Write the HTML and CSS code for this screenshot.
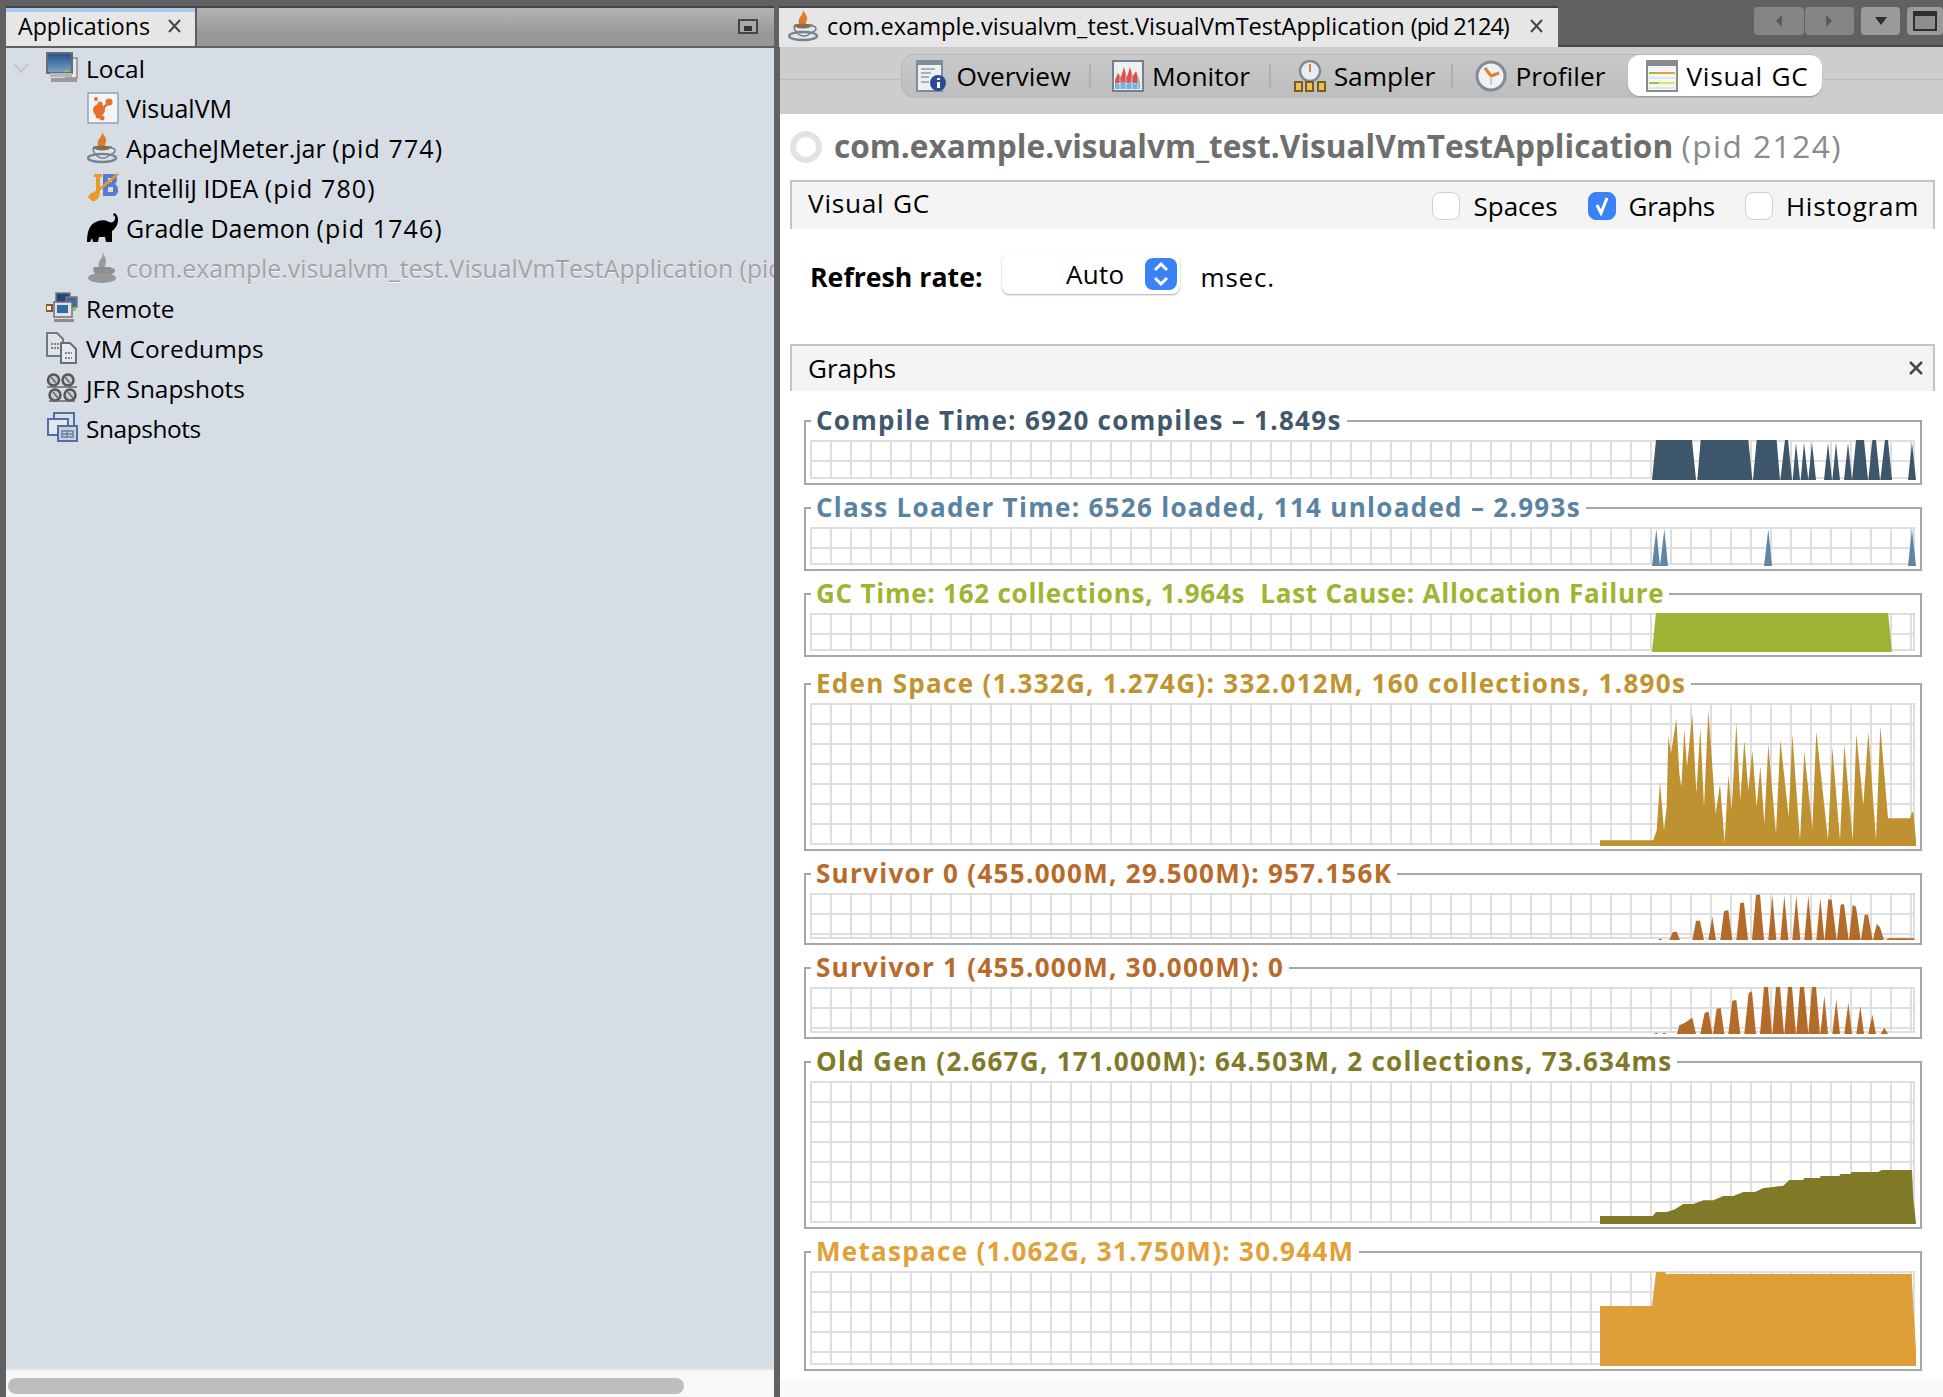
FILE: index.html
```html
<!DOCTYPE html>
<html lang="en">
<head>
<meta charset="utf-8">
<title>VisualVM</title>
<link rel="stylesheet" href="styles.css">
</head>
<body>
<svg class="defs" width="0" height="0" aria-hidden="true">
  <defs>
    <linearGradient id="scr" x1="0" y1="0" x2="0" y2="1"><stop offset="0" stop-color="#1f4f8f"/><stop offset="1" stop-color="#7fa6c4"/></linearGradient>
    <symbol id="cup" viewBox="0 0 32 32">
      <path d="M15 0c2 4 5 6 4 10-1 3-2 5-3 6h-3c-3-2-3-6-1-9 2-2 3-4 3-7z" fill="#e07a2c"/>
      <path d="M7 15h17v1c3 0 4 1 4 3s-3 3-6 4c-1 2-3 3-6 3s-7-2-9-6c-1-2-1-4 0-5z" fill="#dfe6ec" stroke="#6d7a85" stroke-width="1.5"/>
      <ellipse cx="15" cy="16" rx="8" ry="2.5" fill="#8a6a4a"/>
      <ellipse cx="15" cy="26" rx="14" ry="4" fill="none" stroke="#78848d" stroke-width="2.5"/>
    </symbol>
    <symbol id="cupg" viewBox="0 0 32 32">
      <path d="M16 0c1 4 3 6 3 9 0 3-1 5-2 7h-4c-2-2-2-5 0-8 2-2 3-4 3-8z" fill="#9a9a9a"/>
      <path d="M7 15h17v1c3 0 4 1 4 3s-3 3-6 4c-1 2-3 3-6 3s-7-2-9-6c-1-2-1-4 0-5z" fill="#8f8f8f"/>
      <ellipse cx="15" cy="26" rx="14" ry="5" fill="#979797"/>
    </symbol>
    <symbol id="close" viewBox="0 0 15 14">
      <path d="M2 1l11 12M13 1L2 13" stroke="#444" stroke-width="2" fill="none"/>
    </symbol>
  </defs>
</svg>
<div class="app">
  <section class="left">
    <header class="left-head">
      <div class="left-tab"><span>Applications</span><svg class="close"><use href="#close"/></svg></div>
      <span class="minimize"><i></i></span>
    </header>
    <div class="tree">
      <div class="row">
        <svg class="chev" width="18" height="12" viewBox="0 0 18 12"><path d="M2 2l7 8 7-8" fill="none" stroke="#c2c8ce" stroke-width="2"/></svg>
        <svg class="ico" viewBox="0 0 32 32"><rect x="20" y="6" width="11" height="20" fill="#e8e8e8" stroke="#8c8c8c" stroke-width="1.5"/><rect x="1" y="1" width="25" height="20" fill="url(#scr)" stroke="#6b6b6b" stroke-width="2"/><rect x="4" y="21" width="22" height="4" fill="#b8b8b8"/><rect x="19" y="18" width="3" height="2" fill="#7ed24a"/><rect x="5" y="26" width="26" height="4" fill="#9a9a9a"/></svg>
        <span>Local</span>
      </div>
      <div class="row lvl2">
        <svg class="ico" viewBox="0 0 32 32"><rect x="1" y="1" width="30" height="30" fill="#f4f4f4" stroke="#8ea3ba" stroke-width="1.5"/><g fill="#e5702c"><circle cx="12" cy="18" r="6"/><circle cx="22" cy="10" r="3.5"/><circle cx="9" cy="7" r="2"/><circle cx="13" cy="12" r="2.5"/><path d="M14 16l8-7 1 2-7 7z"/><circle cx="15" cy="26" r="2.5"/><circle cx="11" cy="24" r="2.5"/></g></svg>
        <span>VisualVM</span>
      </div>
      <div class="row lvl2"><svg class="ico"><use href="#cup"/></svg><span>ApacheJMeter.jar <span class="pid">(pid 774)</span></span></div>
      <div class="row lvl2">
        <svg class="ico" viewBox="0 0 32 32"><path d="M7 2h8v3h-2v14c0 7-4 11-8 10l-4-4 4-5 3 3 1-4V5H7z" fill="#ea9a2c"/><path d="M16 2h10c3 0 4 2 4 5s-1 4-2 5c2 1 3 3 3 6 0 4-2 6-5 6H16zm5 4v4h4V6zm0 9v5h5v-5z" fill="#5a7cc6" fill-rule="evenodd"/><path d="M2 26L31 2" stroke="#ea9a2c" stroke-width="2.5"/></svg>
        <span>IntelliJ IDEA <span class="pid">(pid 780)</span></span>
      </div>
      <div class="row lvl2">
        <svg class="ico" viewBox="0 0 32 32"><path d="M0 30C0 21 2 14 7 11 11 8 18 7 22 10 25 11 27 10 28 7 28.500 5 28 4 26 3L27 1C30 2 31 5 31 8 31 13 28 17 25 19L25 30H19L18 25H12L11 30H6L5 26 3 30Z" fill="#000"/></svg>
        <span>Gradle Daemon <span class="pid">(pid 1746)</span></span>
      </div>
      <div class="row lvl2 dis"><svg class="ico"><use href="#cupg"/></svg><span>com.example.visualvm_test.VisualVmTestApplication (pid 2124)</span></div>
      <div class="row">
        <svg class="ico" viewBox="0 0 32 32"><rect x="10" y="1" width="14" height="11" fill="#24457e" stroke="#7a7a7a" stroke-width="1.500"/><rect x="20" y="5" width="11" height="10" fill="#3e6aa5" stroke="#7a7a7a" stroke-width="1.500"/><rect x="8" y="10" width="18" height="15" fill="#dfe3e6" stroke="#707070" stroke-width="1.500"/><rect x="11" y="13" width="11" height="8" fill="#2f6ba5"/><rect x="0" y="13" width="6" height="6" fill="#eee" stroke="#8a5a24" stroke-width="2"/><rect x="27" y="16" width="3" height="3" fill="#7ed24a"/><rect x="8" y="27" width="20" height="3" fill="#8c8c8c"/></svg>
        <span>Remote</span>
      </div>
      <div class="row">
        <svg class="ico" viewBox="0 0 32 32"><path d="M1 1h10l6 6v17H1z" fill="#dfe4e9" stroke="#707880" stroke-width="2"/><path d="M15 11h9l6 6v14H15z" fill="#e6eaee" stroke="#66707a" stroke-width="2"/><path d="M5 12h8M5 16h8M19 21h7M19 26h7" stroke="#7d848b" stroke-width="2" stroke-dasharray="2 1"/></svg>
        <span class="wide">VM Coredumps</span>
      </div>
      <div class="row">
        <svg class="ico" viewBox="0 0 32 32"><g fill="#c8ccd0" stroke="#555" stroke-width="2.500"><circle cx="7.500" cy="8" r="5.500"/><circle cx="22" cy="8" r="5.500"/><circle cx="9" cy="23" r="5.500"/><circle cx="24" cy="23" r="5.500"/></g><path d="M5 5l5 6M19 5l5 6M7 20l5 6M22 20l5 6M1 15h30M3 29h26" stroke="#666" stroke-width="1.500" fill="none"/></svg>
        <span>JFR Snapshots</span>
      </div>
      <div class="row">
        <svg class="ico" viewBox="0 0 32 32"><rect x="8" y="1" width="20" height="14" fill="#d8dee6" stroke="#4f6ea8" stroke-width="2"/><rect x="2" y="7" width="20" height="16" fill="#e3e7ec" stroke="#4f6ea8" stroke-width="2"/><rect x="12" y="14" width="19" height="15" fill="#c8d0dc" stroke="#4f6ea8" stroke-width="2"/><path d="M16 19h11v6H16zM21 19v6M16 22h11" fill="none" stroke="#6d7f99" stroke-width="1.500"/></svg>
        <span class="tight">Snapshots</span>
      </div>
    </div>
    <div class="left-scroll"><div class="thumb"></div></div>
  </section>

  <section class="right">
    <header class="right-head">
      <div class="right-tab">
        <svg class="ico"><use href="#cup"/></svg>
        <span class="tab-label">com.example.visualvm_test.VisualVmTestApplication <span class="tab-pid">(pid 2124)</span></span>
        <svg class="close"><use href="#close"/></svg>
      </div>
      <div class="win-btns">
        <div class="btn-pair">
          <span class="wbtn"><svg width="8" height="14" viewBox="0 0 8 14"><path d="M7 1L1 7l6 6z" fill="#5b5b5b"/></svg></span>
          <span class="wbtn"><svg width="8" height="14" viewBox="0 0 8 14"><path d="M1 1l6 6-6 6z" fill="#5b5b5b"/></svg></span>
        </div>
        <span class="wbtn solo"><svg width="14" height="10" viewBox="0 0 14 10"><path d="M1 1h12L7 9z" fill="#2e2e2e"/></svg></span>
        <span class="wbtn last"><svg width="24" height="20" viewBox="0 0 24 20"><rect x="1" y="1" width="22" height="18" fill="#8e8e8e" stroke="#2e2e2e" stroke-width="2"/><rect x="1" y="1" width="22" height="4" fill="#2e2e2e"/></svg></span>
      </div>
    </header>
    <nav class="toolbar">
      <div class="pill">
        <div class="tool nudge-l">
          <svg class="ico" viewBox="0 0 32 32"><rect x="1" y="1" width="25" height="30" fill="#eef1f4" stroke="#7f8c99" stroke-width="2"/><rect x="1" y="1" width="25" height="4" fill="#7f8c99"/><path d="M5 9h14M5 13h10M5 17h8M5 22h8" stroke="#a9b3bd" stroke-width="2"/><circle cx="22" cy="23" r="8" fill="#2b4a94"/><rect x="21" y="22" width="3" height="6" fill="#fff"/><rect x="21" y="18" width="3" height="2" fill="#fff"/></svg>
          <span>Overview</span>
        </div>
        <div class="tool">
          <svg class="ico" viewBox="0 0 32 32"><rect x="1" y="1" width="30" height="30" fill="#eceff2" stroke="#72808d" stroke-width="2"/><path d="M3 20l3-7 3 4 3-10 3 10 3-10 3 9 3-5 3 8v4H3z" fill="#d9534f"/><path d="M3 29v-7l4 2 4-3 4 3 4-3 4 3 5-3v8z" fill="#7fb0dd"/><path d="M8 3v26M14 3v26M20 3v26M26 3v26" stroke="#fff" stroke-width="1" opacity=".6"/></svg>
          <span>Monitor</span>
        </div>
        <div class="tool nudge-r">
          <svg class="ico" viewBox="0 0 32 32"><circle cx="16" cy="11" r="10" fill="#e9edf1" stroke="#808b95" stroke-width="2.500"/><path d="M16 4v8" stroke="#e0802e" stroke-width="2"/><g fill="#e6c25a" stroke="#7d5a1d" stroke-width="2"><rect x="1" y="22" width="7" height="9"/><rect x="12" y="22" width="7" height="9"/><rect x="24" y="22" width="7" height="9"/></g></svg>
          <span>Sampler</span>
        </div>
        <div class="tool">
          <svg class="ico" viewBox="0 0 32 32"><circle cx="16" cy="16" r="14" fill="#f0f2f4" stroke="#7f8b96" stroke-width="3"/><path d="M16 16L10 8M16 16l8-3" stroke="#e0802e" stroke-width="3"/><path d="M16 17v8" stroke="#c6ccd2" stroke-width="2"/></svg>
          <span>Profiler</span>
        </div>
        <div class="tool active nudge-r">
          <svg class="ico" viewBox="0 0 32 32"><rect x="1" y="1" width="30" height="30" fill="#f5f6f7" stroke="#868b90" stroke-width="2"/><rect x="1" y="1" width="30" height="5" fill="#868b90"/><path d="M3 13h26" stroke="#e8a32c" stroke-width="2"/><path d="M3 13h8M3 23h10" stroke="#8ec63f" stroke-width="2"/><path d="M13 23h16" stroke="#e8e24c" stroke-width="2"/><path d="M3 18h26M3 28h26" stroke="#cfd3d6" stroke-width="1"/></svg>
          <span class="spaced">Visual GC</span>
        </div>
      </div>
    </nav>
    <main class="content">
      <div class="title-row">
        <span class="busy"></span>
        <h1 class="title">com.example.visualvm_test.VisualVmTestApplication <small>(pid 2124)</small></h1>
      </div>
      <div class="section-bar">
        <span class="spaced">Visual GC</span>
        <div class="checks">
          <label class="check"><i class="box"></i>Spaces</label>
          <label class="check graphs"><i class="box on"><svg width="20" height="22" viewBox="0 0 20 22"><path d="M5 10l4 8 6-15" fill="none" stroke="#fff" stroke-width="3"/></svg></i>Graphs</label>
          <label class="check hist"><i class="box"></i>Histogram</label>
        </div>
      </div>
      <div class="refresh">
        <b>Refresh rate:</b>
        <div class="combo"><span>Auto</span><i class="stepper"><svg width="32" height="32" viewBox="0 0 32 32"><path d="M10 12l6-6 6 6M10 20l6 6 6-6" fill="none" stroke="#fff" stroke-width="3"/></svg></i></div>
        <span class="msec">msec.</span>
      </div>
      <div class="section-bar graphs-bar">
        <span>Graphs</span>
        <svg width="14" height="14" viewBox="0 0 14 14"><path d="M1 1l12 12M13 1L1 13" stroke="#4a4a4a" stroke-width="2.600"/></svg>
      </div>
      <div class="panels">
        <div class="panel">
          <h2 class="legend c-compile">Compile Time: 6920 compiles – 1.849s</h2>
          <div class="chart h-39">
            <svg class="data" width="356" height="40" viewBox="0 330 1068 120"><path fill="#3d566a" d="M276 450L288 330H396L408 450ZM412 450L422 330H565L577 450ZM579 450L590 330H650L660 450ZM661 450L675 330H684L696 450ZM698 450L708 338L720 450ZM722 450L732 338L745 450ZM745 450L756 338L768 450ZM792 450L804 338L816 450ZM817 450L828 338L840 450ZM852 450L864 338L876 450ZM876 450L888 330H912L924 450ZM925 450L937 330H948L960 450ZM961 450L975 330H984L996 450ZM1044 450L1056 338L1068 450Z"/></svg>
          </div>
        </div>
        <div class="panel">
          <h2 class="legend c-class">Class Loader Time: 6526 loaded, 114 unloaded – 2.993s</h2>
          <div class="chart h-38">
            <svg class="data" width="356" height="39" viewBox="0 591 1068 117"><path fill="#5f87a5" d="M276 708L289 597L300 708ZM300 708L313 597L324 708ZM612 708L625 597L636 708ZM1044 708L1056 597L1068 708Z"/></svg>
          </div>
        </div>
        <div class="panel">
          <h2 class="legend c-gc">GC Time: 162 collections, 1.964s&nbsp; Last Cause: Allocation Failure</h2>
          <div class="chart h-38">
            <svg class="data" width="356" height="39" viewBox="0 849 1068 117"><path fill="#9fb236" d="M276 966L288 846H984L996 966Z"/></svg>
          </div>
        </div>
        <div class="panel wide-gap">
          <h2 class="legend c-eden">Eden Space (1.332G, 1.274G): 332.012M, 160 collections, 1.890s</h2>
          <div class="chart h-142">
            <svg class="data" width="356" height="143" viewBox="0 128 1068 429"><path fill="#be9230" d="M120 540H280L290 510L300 365L312 510L320 440L325 228L333 280L349 175L358 340L364 380L373 207L381 320L397 162L409 400L421 204L432 440L445 150L467 460L480 372L494 545L505 345L515 450L529 187L541 420L553 240L565 390L577 270L590 440L601 318L613 490L625 252L648 520L661 238L686 470L697 222L720 540L733 273L757 505L769 213L804 540L817 262L840 540L853 252L878 540L889 220L910 435L925 214L948 540L961 198L984 474H1050L1056 456H1060L1068 540V557H120Z"/></svg>
          </div>
        </div>
        <div class="panel">
          <h2 class="legend c-surv">Survivor 0 (455.000M, 29.500M): 957.156K</h2>
          <div class="chart h-46">
            <svg class="data" width="356" height="47" viewBox="0 697 1068 141"><path fill="#b46a28" d="M295 838L301 833L307 838ZM328 838L338 815L350 813L360 838ZM397 838L408 780H420L432 838ZM445 838L457 768L468 838ZM481 838L492 752L505 748L517 838ZM529 838L541 726H552L564 838ZM576 838L588 702H600L612 838ZM625 838L637 705L649 838ZM661 838L673 705L685 838ZM697 838L709 705L721 838ZM733 838L745 705L757 838ZM769 838L781 712L793 838ZM794 838L805 715L815 718L830 838ZM831 838L842 732L852 730L866 838ZM867 838L878 733L888 738L902 838ZM903 838L914 762H924L938 838ZM939 838L950 790L960 800L972 838ZM978 838L985 833H1060L1066 838Z"/></svg>
          </div>
        </div>
        <div class="panel">
          <h2 class="legend c-surv">Survivor 1 (455.000M, 30.000M): 0</h2>
          <div class="chart h-46">
            <svg class="data" width="356" height="47" viewBox="0 979 1068 141"><path fill="#b46a28" d="M282 1120L289 1116L296 1120ZM306 1120L313 1116L320 1120ZM351 1120L358 1094L375 1086L397 1071L408 1120ZM421 1120L434 1056L446 1053L457 1120ZM459 1120L470 1044L482 1042L493 1120ZM505 1120L517 1020L529 1018L541 1120ZM553 1120L566 996L576 993L588 1120ZM600 1120L612 979H624L636 1120ZM637 1120L648 979H660L672 1120ZM673 1120L684 979H696L708 1120ZM709 1120L720 979H732L745 1120ZM745 1120L756 979H768L780 1120ZM781 1120L793 1005L804 1120ZM817 1120L829 1017L840 1120ZM853 1120L865 1026L876 1120ZM889 1120L901 1037L912 1120ZM925 1120L937 1062L948 1120ZM962 1120L973 1101L984 1120Z"/></svg>
          </div>
        </div>
        <div class="panel">
          <h2 class="legend c-old">Old Gen (2.667G, 171.000M): 64.503M, 2 collections, 73.634ms</h2>
          <div class="chart h-142">
            <svg class="data" width="356" height="143" viewBox="0 123 1068 429"><path fill="#807a28" d="M120 528H278L288 516H320L345 508L370 492H400L430 481H460L490 468H520L550 456H585L610 444L640 441L670 437L688 420H730L732 414H780L782 408H838L842 402H872L875 396H955L965 390H1056L1060 480L1065 520L1068 552H120Z"/></svg>
          </div>
        </div>
        <div class="panel">
          <h2 class="legend c-meta">Metaspace (1.062G, 31.750M): 30.944M</h2>
          <div class="chart h-94">
            <svg class="data" width="356" height="95" viewBox="0 693 1068 285"><path fill="#df9f38" d="M120 798H276L288 696H315L318 702H1055L1060 800L1064 860L1068 930V978H120Z"/></svg>
          </div>
        </div>
      </div>
    </main>
  </section>
</div>
</body>
</html>
```

FILE: styles.css
```css
* { box-sizing: border-box; }
html, body { margin: 0; height: 100%; }
body {
  background: #616161;
  font-family: "Open Sans", "Liberation Sans", sans-serif;
  font-size: 24.4px;
  color: #000;
  overflow: hidden;
}
.defs { position: absolute; }
.app { display: flex; height: 1397px; gap: 6px; padding-left: 6px; }
.ico { width: 32px; height: 32px; flex: none; display: block; }
.close { width: 15px; height: 14px; flex: none; display: block; }

/* left pane */
.left { width: 768px; flex: none; display: flex; flex-direction: column; margin-top: 6px; overflow: hidden; }
.left-head {
  height: 42px; flex: none; display: flex; align-items: stretch; justify-content: space-between;
  border-top: 2px solid #444; border-bottom: 2px solid #5f5f5f;
  background: linear-gradient(#b4b4b4, #979797 70%);
}
.left-tab {
  width: 191px; display: flex; align-items: center; gap: 17px; padding: 0 0 3px 12px; font-size: 23.2px;
  background: linear-gradient(#a9c9f2 4px, #e6e6e6 4px);
  border-right: 2px solid #5f5f5f;
}
.minimize {
  width: 20px; height: 15px; margin: 11px 16px 0 0; border: 2px solid #444; background: #a8a8a8;
  display: flex; align-items: flex-end; justify-content: center; padding-bottom: 1px;
}
.minimize i { width: 8px; height: 5px; background: #333; }
.tree { flex: 1; background: #d6dde5; border-bottom: 2px solid #e2e5e8; }
.row { height: 40px; display: flex; align-items: center; gap: 8px; padding-left: 40px; white-space: nowrap; position: relative; }
.lvl2 { padding-left: 81px; gap: 7px; font-size: 25px; }
.pid { letter-spacing: 1.1px; }
.wide { letter-spacing: 0.2px; }
.tight { letter-spacing: -0.4px; }
.dis { color: #a3a3a3; text-shadow: 0 1px 0 #f4f6f8; font-size: 24.8px; overflow: hidden; }
.chev { position: absolute; left: 6px; top: 14px; }
.left-scroll { height: 27px; flex: none; background: #f8f8f8; padding: 8px 90px 3px 2px; }
.thumb { height: 16px; background: #bebebe; border-radius: 8px; }

/* right pane */
.right { flex: 1; min-width: 0; display: flex; flex-direction: column; }
.right-head { height: 47px; flex: none; display: flex; justify-content: space-between; align-items: flex-start; padding-top: 6px; border-bottom: 2px solid #4a4a4a; margin-bottom: -1px; position: relative; }
.right-tab {
  margin-left: -1px; width: 779px; height: 41px; display: flex; align-items: center; gap: 7px; padding: 0 0 3px 9px;
  background: #e6e6e6; border-top: 2px solid #444; white-space: nowrap; font-size: 23.6px;
}
.tab-pid { letter-spacing: -1.1px; }
.right-tab .close { margin-left: 13px; }
.win-btns { display: flex; gap: 7px; }
.btn-pair { display: flex; width: 100px; gap: 1px; }
.wbtn { height: 28px; flex: 1; display: flex; align-items: center; justify-content: center; background: #858585; border-radius: 4px; margin-top: 1px; }
.solo { width: 39px; flex: none; background: #9a9a9a; }
.last { width: 36px; flex: none; background: #9a9a9a; }
.toolbar { height: 68px; flex: none; display: flex; justify-content: center; padding-top: 8px; background: linear-gradient(#cdcdcd 33px, #bcbcbc 33px, #bcbcbc 34px, #cdcdcd 34px); }
.pill {
  height: 44px; display: grid; grid-template-columns: 190px 180px 182px 175px 194px; font-size: 26.3px;
  background: linear-gradient(#c9c9c9, #bdbdbd); border-radius: 14px; box-shadow: inset 0 0 0 1px #b9b9b9;
}
.tool { display: flex; align-items: center; justify-content: center; gap: 8px; position: relative; }
.nudge-l { padding-right: 5px; }
.nudge-r { padding-left: 5px; }
.tool:nth-child(-n+3)::after { content: ""; position: absolute; right: 0; top: 10px; bottom: 10px; width: 2px; background: #b0b0b0; }
.active { background: #fff; border-radius: 12px; box-shadow: 0 1px 1px #999; height: 41px; margin-top: 1px; }
.spaced { letter-spacing: 0.7px; word-spacing: 1px; font-size: 26.3px; }
.content { flex: 1; padding: 0 8px 0 10px; background: linear-gradient(#fff 1266px, #fafafa 1266px); }
.title-row { height: 66px; display: flex; align-items: center; gap: 12px; }
.busy { width: 32px; height: 32px; border-radius: 50%; border: 6px solid #e3e3e6; flex: none; }
.title { margin: 0 0 4px; font-size: 31.6px; font-weight: 700; color: #6e6e6e; white-space: nowrap; }
.title small { font-size: 31.6px; font-weight: 400; color: #8a8a8a; letter-spacing: 1.5px; }
.section-bar {
  height: 49px; display: flex; align-items: center; justify-content: space-between; font-size: 26px;
  background: #f4f4f4; border: 2px solid #c4c4c4; border-bottom: 0; padding: 0 14px 6px 16px;
}
.checks { display: flex; gap: 30px; margin-top: 6px; }
.check { display: flex; align-items: center; gap: 13px; }
.graphs { letter-spacing: -0.3px; }
.hist { letter-spacing: 0.75px; }
.box { width: 28px; height: 28px; border-radius: 8px; background: #fff; border: 1px solid #d0d0d0; display: flex; align-items: center; justify-content: center; }
.box.on { background: #3a82f6; border-color: #3a82f6; }
.refresh { height: 116px; display: flex; align-items: flex-start; gap: 21px; padding: 24px 0 0 20px; font-size: 26px; }
.refresh b { line-height: 48px; font-weight: 700; font-size: 26.7px; margin-right: -2px; }
.msec { line-height: 48px; letter-spacing: 0.8px; }
.combo { width: 178px; height: 41px; display: flex; align-items: center; justify-content: flex-end; gap: 20px; padding-right: 3px; border-radius: 8px; background: #fff; box-shadow: 0 1px 2px #aaa; letter-spacing: 0.3px; }
.stepper { width: 32px; height: 32px; border-radius: 8px; background: #3a82f6; display: block; }
.graphs-bar { height: 47px; padding: 0 10px 2px 16px; margin-top: -1px; margin-bottom: 1px; }
.panels { display: flex; flex-direction: column; gap: 22px; padding: 28px 13px 0 14px; }
.panel { position: relative; border: 2px solid #a6a6a6; padding: 18px 5px 4px 4px; background: #fff; }
.wide-gap { margin-top: 4px; }
.legend {
  position: absolute; left: 5px; top: -18px; margin: 0; padding: 0 5px; background: #fff;
  font-size: 26px; line-height: 32px; font-weight: 700; white-space: nowrap; letter-spacing: 1.3px;
}
.c-compile { color: #3f586d; }
.c-class { color: #5a83a3; }
.c-gc { color: #a0b432; letter-spacing: 0.76px; }
.c-eden { color: #bf9430; }
.c-surv { color: #b86a2a; }
.c-old { color: #807a28; }
.c-meta { color: #dfa138; }
.chart {
  position: relative;
  background-image: linear-gradient(to right, #dedede 2px, transparent 2px), linear-gradient(#dedede 2px, transparent 2px);
  background-size: 20px 100%, 100% 20px;
  border-bottom: 2px solid #dedede; border-right: 2px solid #dedede;
}
.data { position: absolute; right: -3px; bottom: -3px; display: block; }
.h-38 { height: 38px; }
.h-39 { height: 39px; }
.h-46 { height: 46px; }
.h-94 { height: 94px; }
.h-142 { height: 142px; }
```
